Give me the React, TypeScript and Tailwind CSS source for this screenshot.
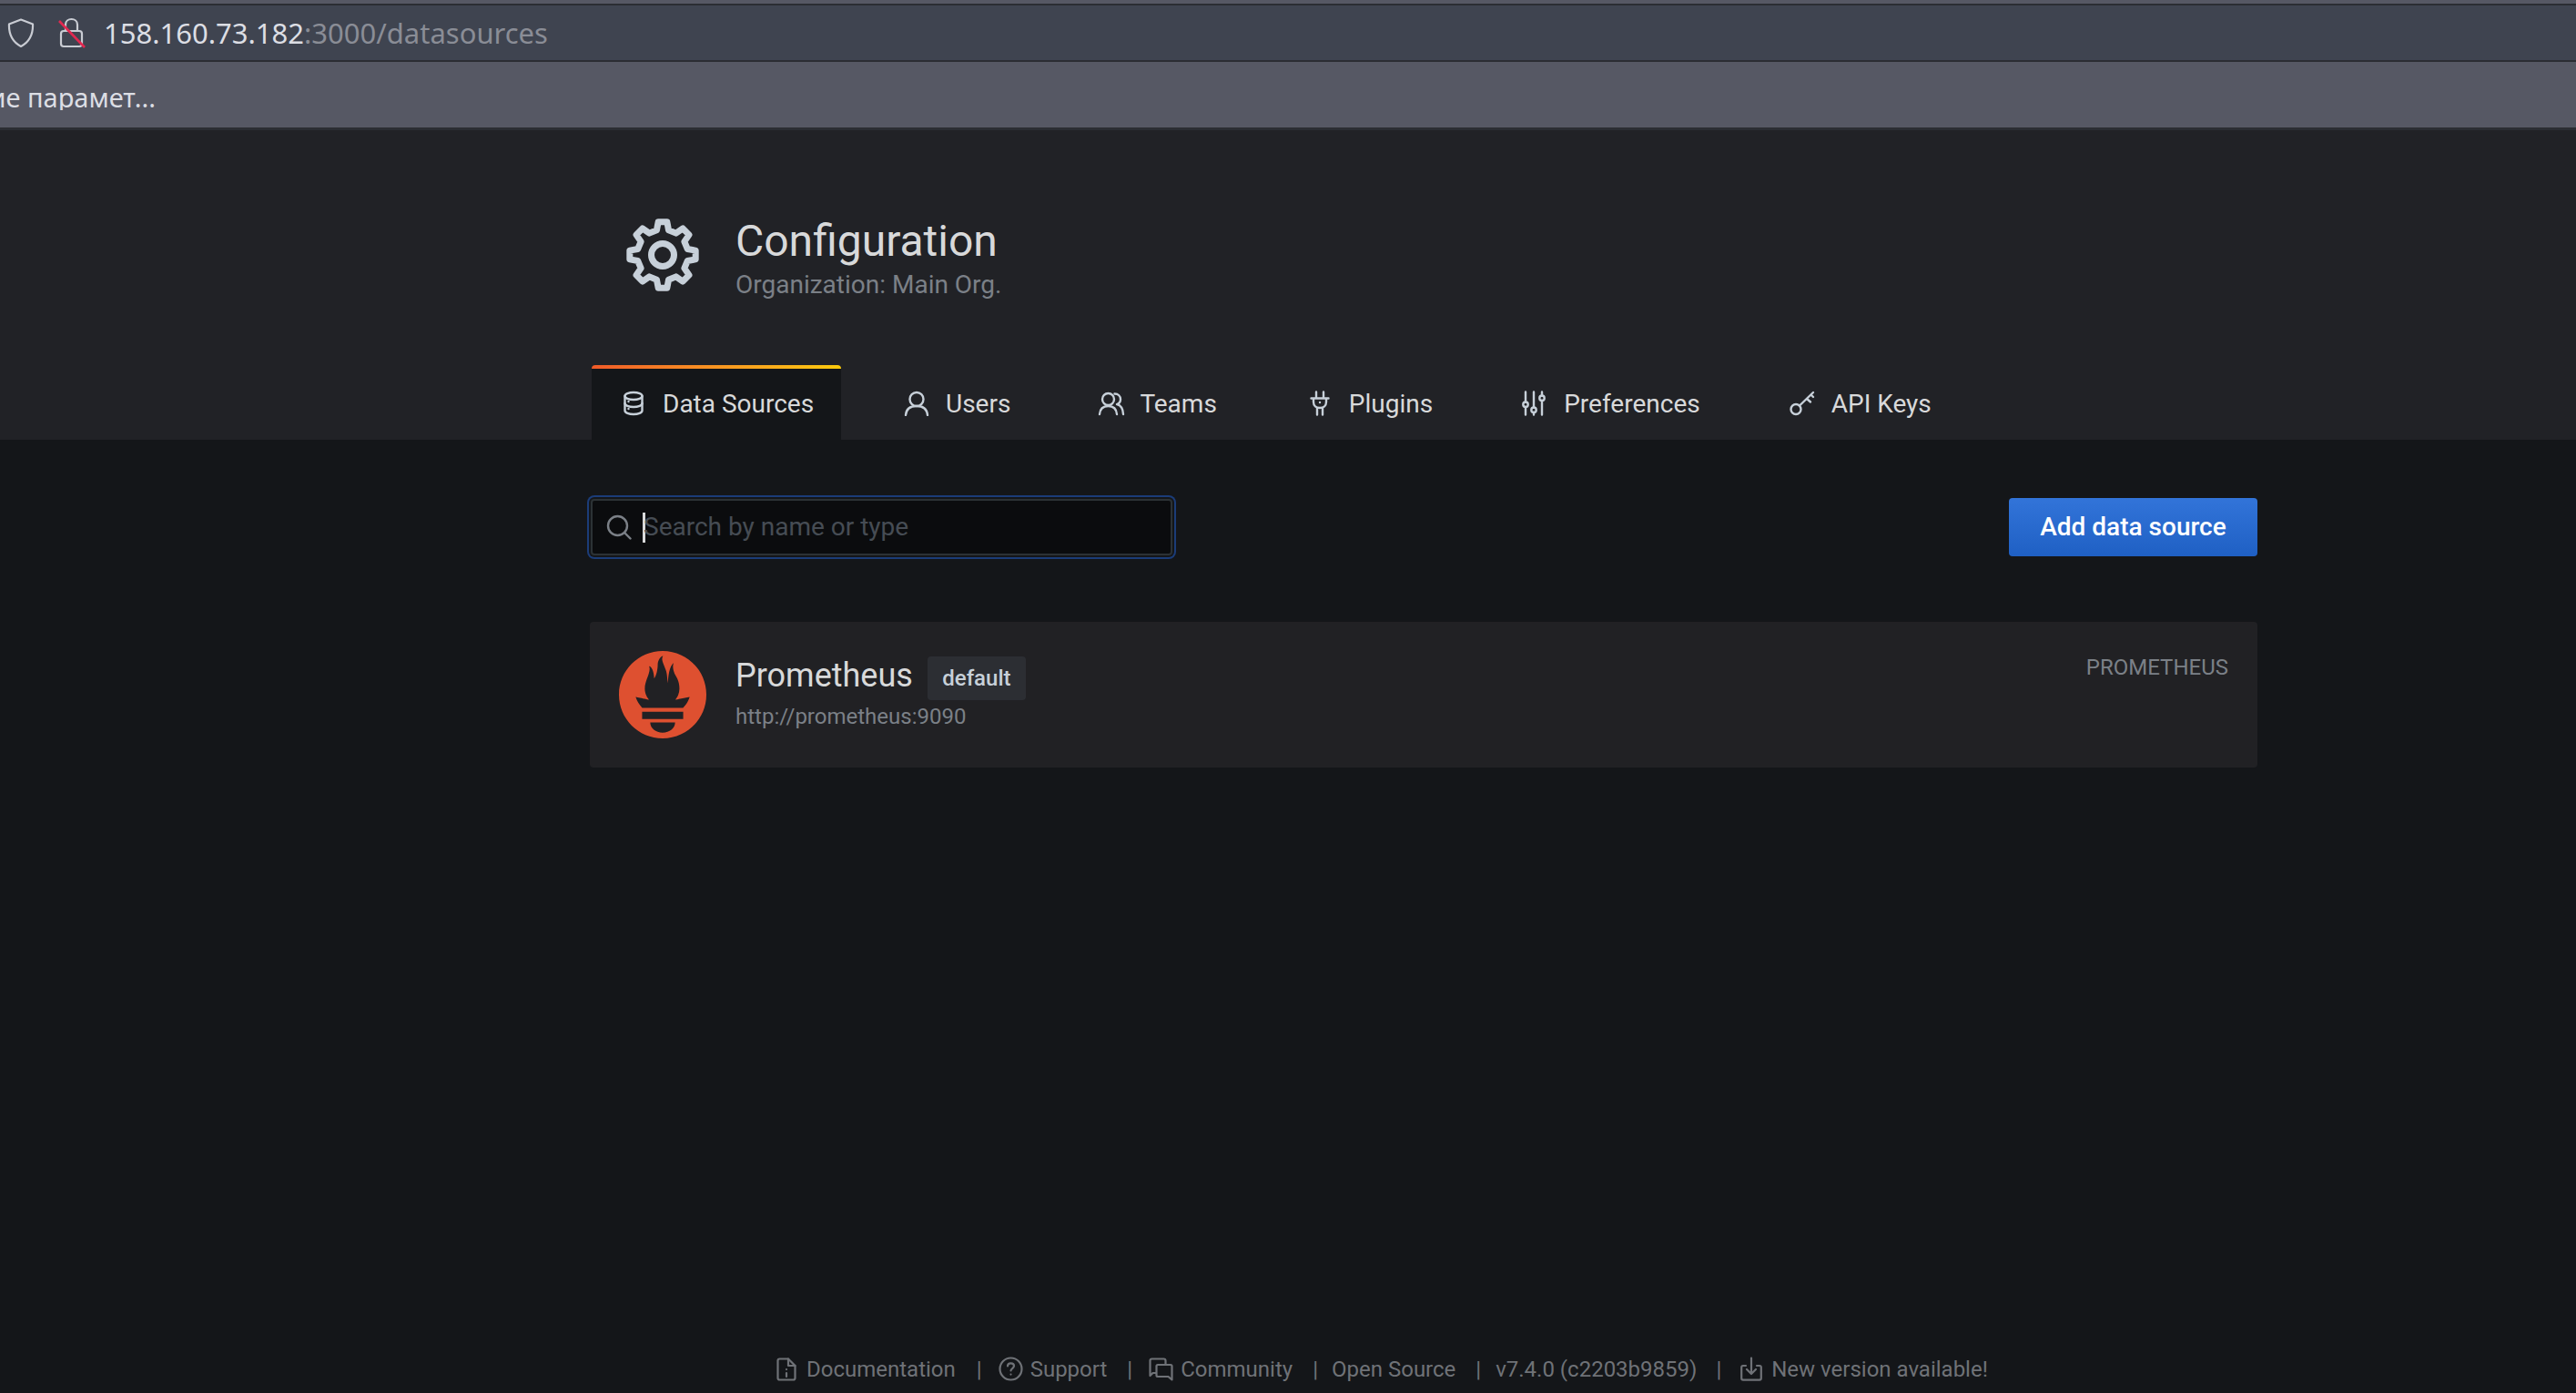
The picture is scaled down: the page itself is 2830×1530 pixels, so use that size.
import React from "react";
import { SiPrometheus } from "react-icons/si";

const gearPath = (() => {
  const teeth = 8, cx = 40, cy = 40, ro = 36.5, ri = 28;
  const pts: string[] = [];
  for (let i = 0; i < teeth; i++) {
    const a = (i / teeth) * Math.PI * 2 - Math.PI / 2;
    const s = (Math.PI * 2) / teeth;
    const p = (r: number, t: number) => `${(cx + r * Math.cos(t)).toFixed(2)} ${(cy + r * Math.sin(t)).toFixed(2)}`;
    pts.push(`${i === 0 ? "M" : "L"}${p(ri, a - s * 0.3)}`, `L${p(ro, a - s * 0.17)}`, `L${p(ro, a + s * 0.17)}`, `L${p(ri, a + s * 0.3)}`);
  }
  return pts.join(" ") + " Z";
})();

const Gear = () => (
  <svg width="80" height="80" viewBox="0 0 80 80" fill="none" stroke="#c7d0d9" strokeWidth="7" strokeLinejoin="round">
    <path d={gearPath} />
    <circle cx="40" cy="40" r="12.5" />
  </svg>
);

type IP = { className?: string };
const base = { fill: "none", stroke: "currentColor", strokeLinecap: "round" as const, strokeLinejoin: "round" as const };

const DbIcon = ({ className }: IP) => (
  <svg className={className} width="24" height="28" viewBox="0 0 24 28" {...base} strokeWidth="2.4">
    <ellipse cx="12" cy="6" rx="9.5" ry="4" />
    <path d="M2.5 6v16c0 2.2 4.3 4 9.5 4s9.500-1.800 9.500-4V6" />
    <path d="M2.500 14c0 2.200 4.300 4 9.500 4s9.500-1.800 9.500-4" />
    <path d="M6.500 12v.1M6.500 20v.1" />
  </svg>
);
const UserIcon = ({ className }: IP) => (
  <svg className={className} width="28" height="28" viewBox="0 0 28 28" {...base} strokeWidth="2.4">
    <circle cx="14" cy="9.500" r="7.500" />
    <path d="M2 27c.5-6.500 5-10 12-10s11.500 3.500 12 10" />
  </svg>
);
const TeamIcon = ({ className }: IP) => (
  <svg className={className} width="30" height="28" viewBox="0 0 30 28" {...base} strokeWidth="2.400">
    <circle cx="11.500" cy="9.500" r="6.500" />
    <path d="M2 26c.5-6 4-9 9.500-9s9 3 9.500 9" />
    <path d="M18.500 3.500c4 0 6.500 2.700 6.500 6 0 2.500-1.500 4.800-4 5.700 4.500 1 6.700 4.500 7 10.800" />
  </svg>
);
const PlugIcon = ({ className }: IP) => (
  <svg className={className} width="22" height="28" viewBox="0 0 22 28" {...base} strokeWidth="2.400">
    <path d="M7 1.500v7M15 1.500v7M1.500 8.500h19M4 8.500v4c0 4 3 6.500 7 6.500s7-2.500 7-6.500v-4M8 19v7.500M14 19v7.500" />
    <path d="M11 13v.1" />
  </svg>
);
const SlidersIcon = ({ className }: IP) => (
  <svg className={className} width="26" height="28" viewBox="0 0 26 28" {...base} strokeWidth="2.400">
    <path d="M4 1.500v11M4 18v8.500M13 1.500v17M13 24v2.500M22 1.500v4M22 11v15.500" />
    <circle cx="4" cy="15.200" r="2.700" />
    <circle cx="13" cy="21.200" r="2.700" />
    <circle cx="22" cy="8.200" r="2.700" />
  </svg>
);
const KeyIcon = ({ className }: IP) => (
  <svg className={className} width="28" height="28" viewBox="0 0 28 28" {...base} strokeWidth="2.400">
    <circle cx="7" cy="20.500" r="5.500" />
    <path d="M11 16.500 26 2M19 9l4 3.500M23.500 4.500l2.500 2.500" />
  </svg>
);
const SearchIcon = () => (
  <svg className="text-[#7b8087] shrink-0" width="28" height="28" viewBox="0 0 28 28" {...base} strokeWidth="2.400">
    <circle cx="12.500" cy="12.500" r="10.500" />
    <path d="M20.500 20.500 26.500 26.500" />
  </svg>
);
const FileIcon = () => (
  <svg width="22" height="26" viewBox="0 0 22 26" {...base} strokeWidth="2.200">
    <path d="M3.500 1.500H13l7.500 7.500v13.500c0 1.200-1 2-2 2h-15c-1.200 0-2-.8-2-2v-19c0-1.200.8-2 2-2Z" />
    <path d="M13 1.500V9h7.500M11 13v.1M11 17v4" />
  </svg>
);
const HelpIcon = () => (
  <svg width="27" height="27" viewBox="0 0 27 27" {...base} strokeWidth="2.200">
    <circle cx="13.500" cy="13.500" r="12" />
    <path d="M10 10.500c0-2 1.500-3.200 3.500-3.200s3.500 1.200 3.500 3c0 2.700-3.500 2.700-3.500 5.200M13.500 19.500v.1" />
  </svg>
);
const ChatIcon = () => (
  <svg width="27" height="26" viewBox="0 0 27 26" {...base} strokeWidth="2.200">
    <path d="M8 17H4.500L1.500 20V3.500c0-1.200.8-2 2-2h13c1.200 0 2 .8 2 2V8" />
    <path d="M10 8h14c.9 0 1.500.6 1.500 1.500v15L21.500 21H10c-.9 0-1.500-.6-1.500-1.500v-10C8.500 8.600 9.100 8 10 8Z" />
  </svg>
);
const DownloadIcon = () => (
  <svg width="24" height="27" viewBox="0 0 24 27" {...base} strokeWidth="2.200">
    <path d="M6 10H3c-1 0-1.800.8-1.800 1.800v12c0 1 .8 1.800 1.800 1.800h18c1 0 1.800-.8 1.800-1.800v-12c0-1-.8-1.800-1.800-1.800h-3" />
    <path d="M12 1.500v17M7 14l5 5 5-5" />
  </svg>
);

const tabs = [
  { label: "Users", Icon: UserIcon, w: "w-[46px]", m: "" },
  { label: "Teams", Icon: TeamIcon, w: "w-[46px]", m: "-ml-[2px]" },
  { label: "Plugins", Icon: PlugIcon, w: "w-[43px]", m: "ml-[4px]" },
  { label: "Preferences", Icon: SlidersIcon, w: "w-[46px]", m: "" },
  { label: "API Keys", Icon: KeyIcon, w: "w-[46px]", m: "" },
];

const Sep = () => <span className="text-[#6f7277]">|</span>;

export default function App() {
  return (
    <div className="w-[2830px] h-[1530px] overflow-hidden flex flex-col bg-[#141619] font-['Roboto',sans-serif]">
      <div className="h-[143px] shrink-0 flex flex-col bg-[#2b2d33] font-['Noto_Sans',sans-serif]">
        <div className="h-[4px] bg-[#565864]" />
        <div className="h-[60px] mt-[2px] bg-[#3f4450] flex items-center">
          <svg className="ml-[8px]" width="30" height="32" viewBox="0 0 30 32" fill="none" stroke="#c9ccd3" strokeWidth="2.200" strokeLinejoin="round">
            <path d="M15 1.500 28 6.500c.5 11-3.500 19.500-13 24.500C5.500 26 1.500 17.500 2 6.500Z" />
          </svg>
          <svg className="ml-[26px]" width="30" height="34" viewBox="0 0 30 34" fill="none" strokeWidth="2.200">
            <path d="M8 15V8c0-8 13-8 13 0v7" stroke="#c9ccd3" />
            <rect x="3" y="15" width="23" height="17" rx="3" stroke="#c9ccd3" />
            <path d="M1 4 29 33" stroke="#e22850" strokeWidth="2.600" />
          </svg>
          <div className="ml-[20px] text-[31px] leading-none whitespace-nowrap">
            <span className="text-[#dcdee4]">158.160.73.182</span>
            <span className="text-[#8a8d96]">:3000/datasources</span>
          </div>
        </div>
        <div className="h-[2px] bg-[#2b2d33]" />
        <div className="h-[72px] bg-[#565864] flex items-center">
          <div className="w-[171px] mt-[5px] flex justify-end overflow-hidden text-[29px] leading-none whitespace-nowrap text-[#dcdee4]">
            <span className="shrink-0">Изменение парамет...</span>
          </div>
        </div>
        <div className="h-[3px] bg-[#2b2d33]" />
      </div>

      <div className="h-[340px] shrink-0 bg-[#212226] pl-[648px] pr-[350px] flex flex-col">
        <div className="mt-[97px] h-[80px] flex pl-[40px]">
          <Gear />
          <div className="ml-[40px] flex flex-col">
            <div className="text-[48px] leading-[56px] text-[#d8d9da] mt-[-3px]">Configuration</div>
            <div className="text-[28px] leading-[32px] text-[#7b8087] mt-[4px]">Organization: Main Org.</div>
          </div>
        </div>
        <div className="mt-[81px] h-[82px] flex pl-[2px]">
          <div className="relative w-[274px] h-[82px] bg-[#141619] rounded-t-[4px] pl-[34px] flex items-center text-[28px] text-[#d8d9da]">
            <div className="absolute left-0 right-0 top-0 h-[4px] rounded-t-[4px] bg-gradient-to-r from-[#f05a28] to-[#fbca0a]" />
            <div className="w-[44px] shrink-0 mt-[2px]"><DbIcon className="text-[#c7d0d9]" /></div>
            <span className="mt-[3px] whitespace-nowrap">Data Sources</span>
          </div>
          <div className="flex pl-[69px] gap-[98px]">
            {tabs.map(({ label, Icon, w, m }) => (
              <div key={label} className={`flex items-center h-[82px] text-[28px] text-[#d8d9da] ${m}`}>
                <div className={`${w} shrink-0 mt-[2px]`}><Icon className="text-[#c7d0d9]" /></div>
                <span className="mt-[3px] whitespace-nowrap">{label}</span>
              </div>
            ))}
          </div>
        </div>
      </div>

      <div className="flex-1 flex flex-col pl-[648px] pr-[350px]">
        <div className="mt-[60px] h-[72px] flex items-center justify-between">
          <div className="ml-[1px] w-[639px] h-[62px] bg-[#0b0c0e] border-2 border-[#2c3235] rounded-[4px] shadow-[0_0_0_2px_#141619,0_0_0_4px_#1b3c78] flex items-center pl-[15px]">
            <SearchIcon />
            <span className="ml-[12px] w-[3px] h-[33px] bg-[#d8d9da] shrink-0" />
            <input
              readOnly
              placeholder="Search by name or type"
              className="flex-1 -ml-[2px] bg-transparent outline-none text-[28px] placeholder:text-[#464c54]"
            />
          </div>
          <button className="w-[273px] h-[64px] rounded-[4px] bg-gradient-to-b from-[#3274d9] to-[#1f60c4] text-white text-[28px] font-medium">
            Add data source
          </button>
        </div>

        <div className="mt-[68px] h-[160px] bg-[#212124] rounded-[4px] flex pl-[32px] pr-[32px]">
          <SiPrometheus className="mt-[32px] text-[#de5030]" size={96} />
          <div className="ml-[33px] flex flex-col flex-1">
            <div className="flex items-center mt-[38px] h-[48px]">
              <span className="text-[36px] leading-none text-[#d8d9da] -mt-[6px] -ml-[1px]">Prometheus</span>
              <span className="ml-[16px] h-[48px] w-[108px] flex items-center justify-center rounded-[4px] bg-[#2c2e33] text-[24px] font-medium text-[#c7d0d9]">
                default
              </span>
            </div>
            <div className="text-[24px] leading-[30px] text-[#7b8087] mt-[3px] -ml-[1px]">http://prometheus:9090</div>
          </div>
          <div className="mt-[35px] text-[24px] leading-[30px] text-[#7b8087]">PROMETHEUS</div>
        </div>

        <div className="mt-auto h-[56px] -ml-[648px] pl-[853px] pt-[3px] flex items-center whitespace-nowrap text-[24px] text-[#6f7277]">
          <FileIcon />
          <span className="ml-[11px]">Documentation</span>
          <span className="ml-[23px]"><Sep /></span>
          <span className="ml-[18px] flex"><HelpIcon /></span>
          <span className="ml-[8px]">Support</span>
          <span className="ml-[22px]"><Sep /></span>
          <span className="ml-[18px] flex"><ChatIcon /></span>
          <span className="ml-[8px]">Community</span>
          <span className="ml-[22px]"><Sep /></span>
          <span className="ml-[15px]">Open Source</span>
          <span className="ml-[22px]"><Sep /></span>
          <span className="ml-[16px]">v7.4.0 (c2203b9859)</span>
          <span className="ml-[21px]"><Sep /></span>
          <span className="ml-[21px] flex"><DownloadIcon /></span>
          <span className="ml-[10px]">New version available!</span>
        </div>
      </div>
    </div>
  );
}
